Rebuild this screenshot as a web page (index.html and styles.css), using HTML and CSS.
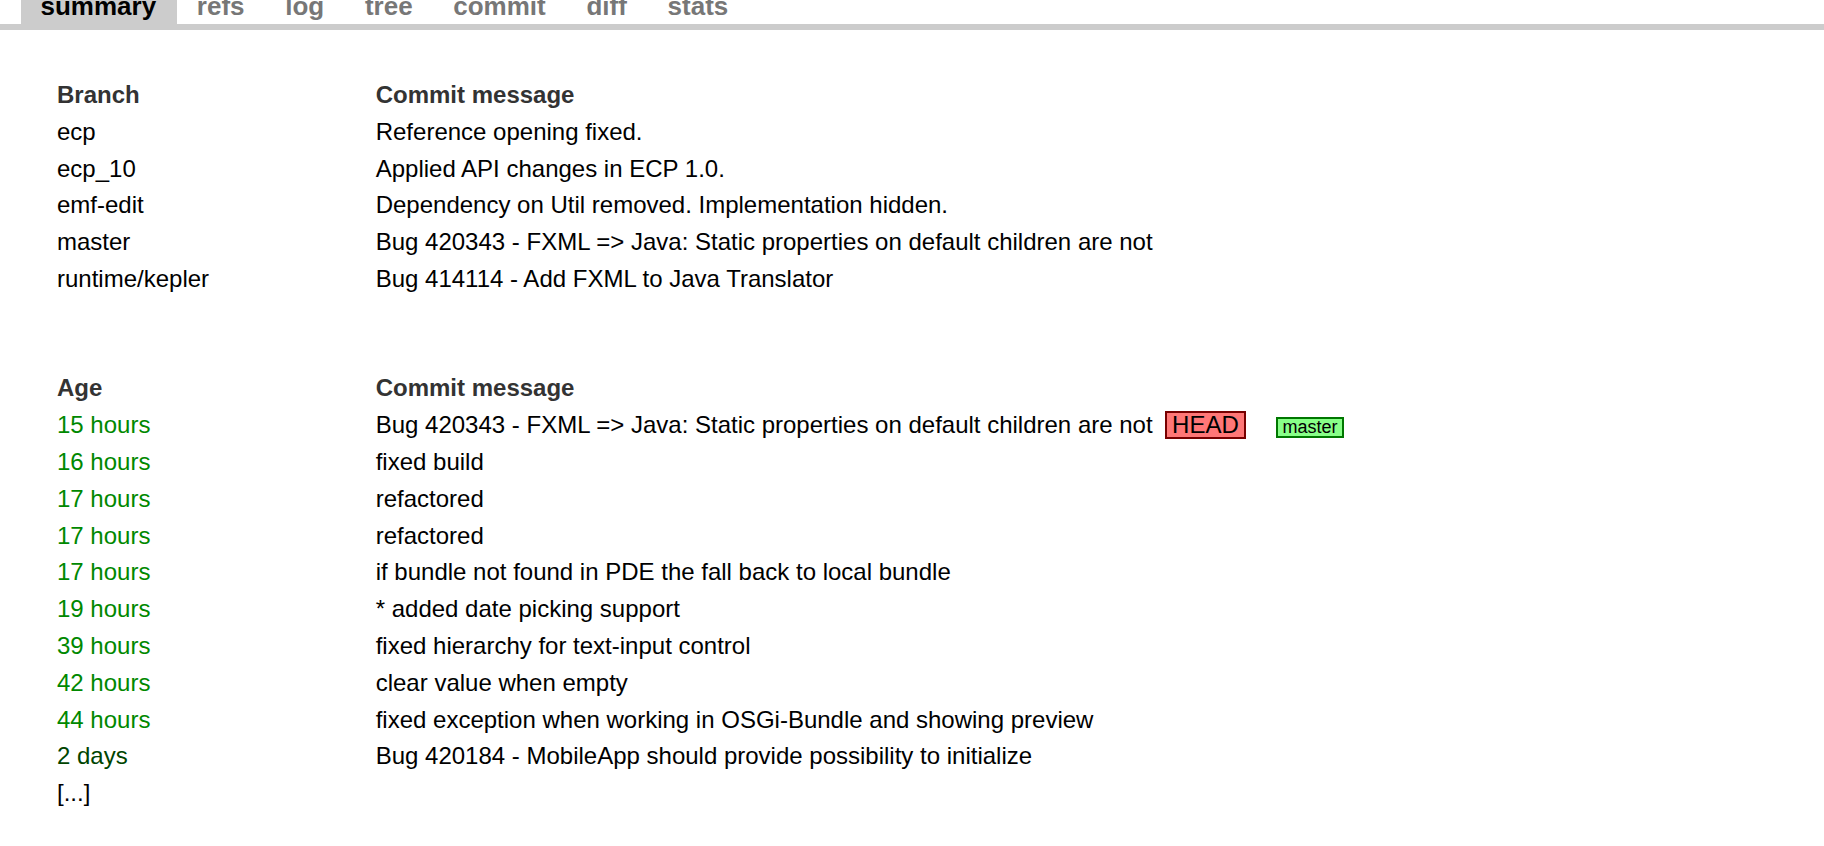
FILE: index.html
```html
<!DOCTYPE html>
<html>
<head>
<meta charset="utf-8">
<title>summary</title>
<link rel="stylesheet" href="styles.css">
</head>
<body>
<div class="tabs">
  <a class="tab active">summary</a>
  <a class="tab">refs</a>
  <a class="tab">log</a>
  <a class="tab">tree</a>
  <a class="tab">commit</a>
  <a class="tab">diff</a>
  <a class="tab">stats</a>
</div>
<table class="list">
  <tr class="head"><th class="c1">Branch</th><th>Commit message</th></tr>
  <tr><td class="c1">ecp</td><td>Reference opening fixed.</td></tr>
  <tr><td class="c1">ecp_10</td><td>Applied API changes in ECP 1.0.</td></tr>
  <tr><td class="c1">emf-edit</td><td>Dependency on Util removed. Implementation hidden.</td></tr>
  <tr><td class="c1">master</td><td>Bug 420343 - FXML =&gt; Java: Static properties on default children are not</td></tr>
  <tr><td class="c1">runtime/kepler</td><td>Bug 414114 - Add FXML to Java Translator</td></tr>
  <tr class="spacer"><td colspan="2"></td></tr>
  <tr class="head"><th class="c1">Age</th><th>Commit message</th></tr>
  <tr><td class="c1 hours">15 hours</td><td>Bug 420343 - FXML =&gt; Java: Static properties on default children are not<span class="deco head-deco">HEAD</span><span class="deco branch-deco">master</span></td></tr>
  <tr><td class="c1 hours">16 hours</td><td>fixed build</td></tr>
  <tr><td class="c1 hours">17 hours</td><td>refactored</td></tr>
  <tr><td class="c1 hours">17 hours</td><td>refactored</td></tr>
  <tr><td class="c1 hours">17 hours</td><td>if bundle not found in PDE the fall back to local bundle</td></tr>
  <tr><td class="c1 hours">19 hours</td><td>* added date picking support</td></tr>
  <tr><td class="c1 hours">39 hours</td><td>fixed hierarchy for text-input control</td></tr>
  <tr><td class="c1 hours">42 hours</td><td>clear value when empty</td></tr>
  <tr><td class="c1 hours">44 hours</td><td>fixed exception when working in OSGi-Bundle and showing preview</td></tr>
  <tr><td class="c1 days">2 days</td><td>Bug 420184 - MobileApp should provide possibility to initialize</td></tr>
  <tr><td class="c1">[...]</td><td></td></tr>
</table>
</body>
</html>
```
FILE: styles.css
```css
html, body {
  margin: 0;
  padding: 0;
  background: #fff;
}
body {
  font-family: "Liberation Sans", Arial, Helvetica, sans-serif;
  color: #000;
  overflow: hidden;
}
.tabs {
  display: flex;
  gap: 1.7px;
  padding-left: 21px;
  margin-top: -11px;
  border-bottom: 6px solid #ccc;
}
.tab {
  display: block;
  font-size: 26px;
  font-weight: bold;
  line-height: 30px;
  padding: 2px 19.5px 3px 19.5px;
  color: #777;
}
.tab.active {
  color: #000;
  background: #ccc;
  padding-right: 21px;
}
.tab.active + .tab {
  margin-left: -1.5px;
}
.list {
  border-collapse: collapse;
  margin-left: 57px;
  margin-top: 47px;
  font-size: 24px;
}
.list th, .list td {
  padding: 0;
  height: 36.8px;
  line-height: 36.8px;
  text-align: left;
  vertical-align: middle;
  white-space: nowrap;
}
.list th {
  font-weight: bold;
  color: #333;
}
.list .c1 {
  width: 318.7px;
}
.list .spacer td {
  height: 72.6px;
}
.hours {
  color: #080;
}
.days {
  color: #040;
}
.deco {
  display: inline-block;
  color: #000;
}
.head-deco {
  font-size: 24px;
  line-height: 24px;
  padding: 0 5.5px;
  margin-left: 12px;
  border: 2px solid #770000;
  background: #ff7777;
}
.branch-deco {
  font-size: 18px;
  line-height: 17px;
  padding: 0 4.3px;
  margin-left: 30px;
  border: 2px solid #007700;
  background: #88ff88;
}
```
